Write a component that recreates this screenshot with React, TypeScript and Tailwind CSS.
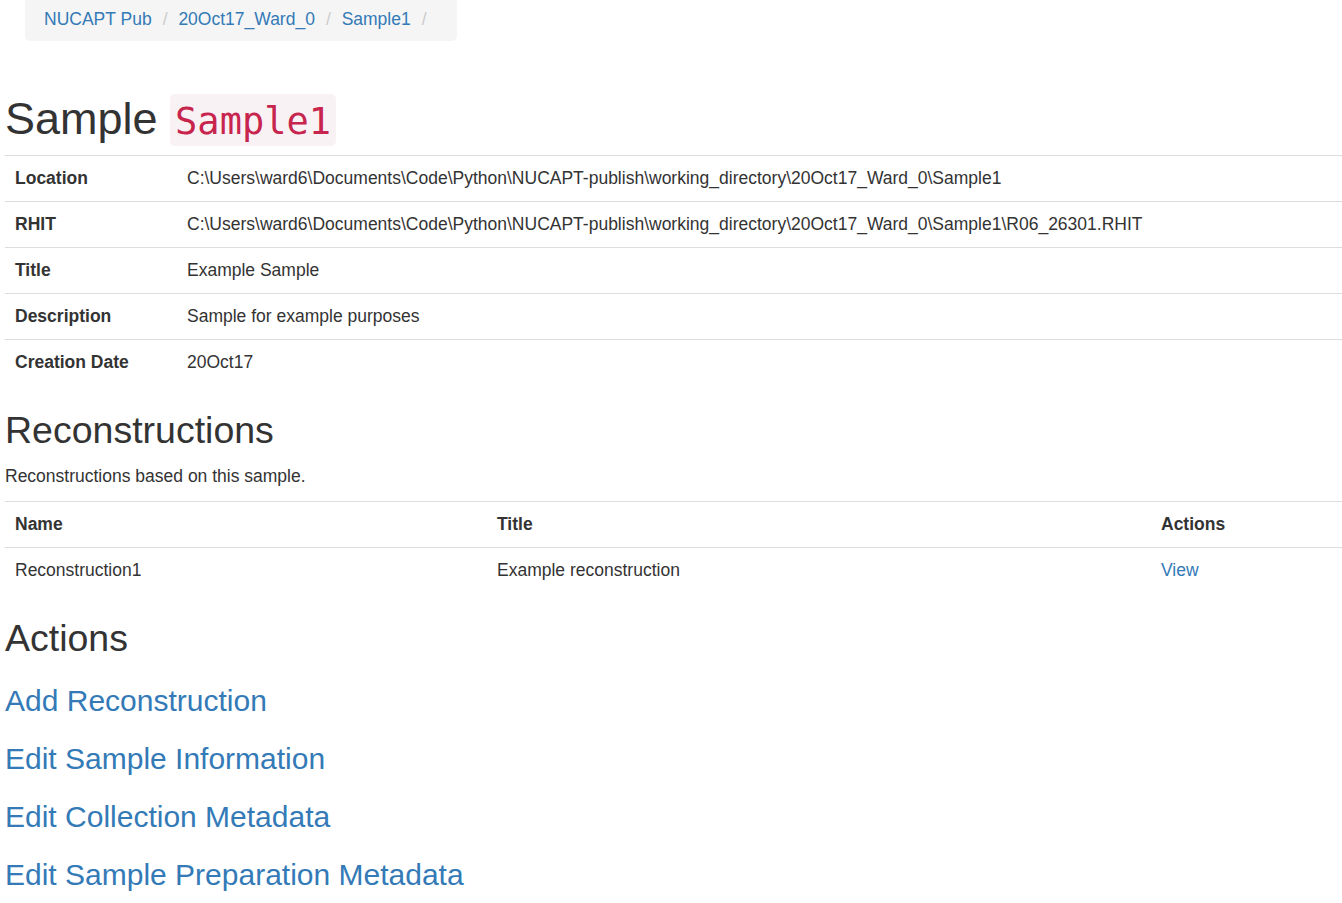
import React from "react";

const sans = { fontFamily: '"Liberation Sans", Arial, Helvetica, sans-serif' };

export default function App() {
  const info: [string, string][] = [
    ["Location", "C:\\Users\\ward6\\Documents\\Code\\Python\\NUCAPT-publish\\working_directory\\20Oct17_Ward_0\\Sample1"],
    ["RHIT", "C:\\Users\\ward6\\Documents\\Code\\Python\\NUCAPT-publish\\working_directory\\20Oct17_Ward_0\\Sample1\\R06_26301.RHIT"],
    ["Title", "Example Sample"],
    ["Description", "Sample for example purposes"],
    ["Creation Date", "20Oct17"],
  ];
  const crumbs = ["NUCAPT Pub", "20Oct17_Ward_0", "Sample1"];
  const actions = [
    "Add Reconstruction",
    "Edit Sample Information",
    "Edit Collection Metadata",
    "Edit Sample Preparation Metadata",
  ];
  return (
    <div className="bg-white min-h-[903px] text-[#333] text-[17.5px] leading-[25px] pl-[5px]" style={sans}>
      <div className="pl-[20px]">
        <ol className="inline-flex h-[41px] w-[432px] items-start bg-[#f5f5f5] rounded-b-[5px] pt-[7px] pl-[19px] list-none">
          {crumbs.map((c) => (
            <li key={c} className="flex">
              <a className="text-[#337ab7] cursor-pointer">{c}</a>
              <span className="text-[#ccc] pl-[11px] pr-[6px] whitespace-pre">{"/\u00a0"}</span>
            </li>
          ))}
        </ol>
      </div>

      <h1 className="mt-[53px] text-[45px] leading-[50px] font-normal whitespace-nowrap">
        Sample{" "}
        <code
          className="inline-block rounded-[5px] bg-[#f9f2f4] text-[#c7254e] px-[5px] pt-[5px] pb-[1px] text-[37px] leading-[46px] align-baseline"
          style={{ fontFamily: '"DejaVu Sans Mono", "Liberation Mono", monospace' }}
        >
          Sample1
        </code>
      </h1>

      <table className="mt-[9px] w-full border-collapse">
        <tbody>
          {info.map(([k, v]) => (
            <tr key={k} className="border-t border-[#ddd]">
              <th className="w-[172px] text-left font-bold p-[10px] align-top">{k}</th>
              <td className="p-[10px] align-top">{v}</td>
            </tr>
          ))}
        </tbody>
      </table>

      <h2 className="mt-[25px] text-[37.5px] leading-[41px] font-normal">Reconstructions</h2>
      <p className="mt-[12.5px] mb-[12.5px]">Reconstructions based on this sample.</p>

      <table className="w-full border-collapse">
        <thead>
          <tr className="border-t border-[#ddd]">
            <th className="w-[482px] text-left font-bold p-[10px]">Name</th>
            <th className="w-[664px] text-left font-bold p-[10px]">Title</th>
            <th className="text-left font-bold p-[10px]">Actions</th>
          </tr>
        </thead>
        <tbody>
          <tr className="border-t border-[#ddd]">
            <td className="p-[10px]">Reconstruction1</td>
            <td className="p-[10px]">Example reconstruction</td>
            <td className="p-[10px]">
              <a className="text-[#337ab7] cursor-pointer">View</a>
            </td>
          </tr>
        </tbody>
      </table>

      <h2 className="mt-[25px] text-[37.5px] leading-[41px] font-normal">Actions</h2>
      <div className="flex flex-col gap-[25px] mt-[25px] pb-[12px]">
        {actions.map((a) => (
          <h3 key={a} className="text-[30px] leading-[33px] font-normal">
            <a className="text-[#337ab7] cursor-pointer">{a}</a>
          </h3>
        ))}
      </div>
    </div>
  );
}
